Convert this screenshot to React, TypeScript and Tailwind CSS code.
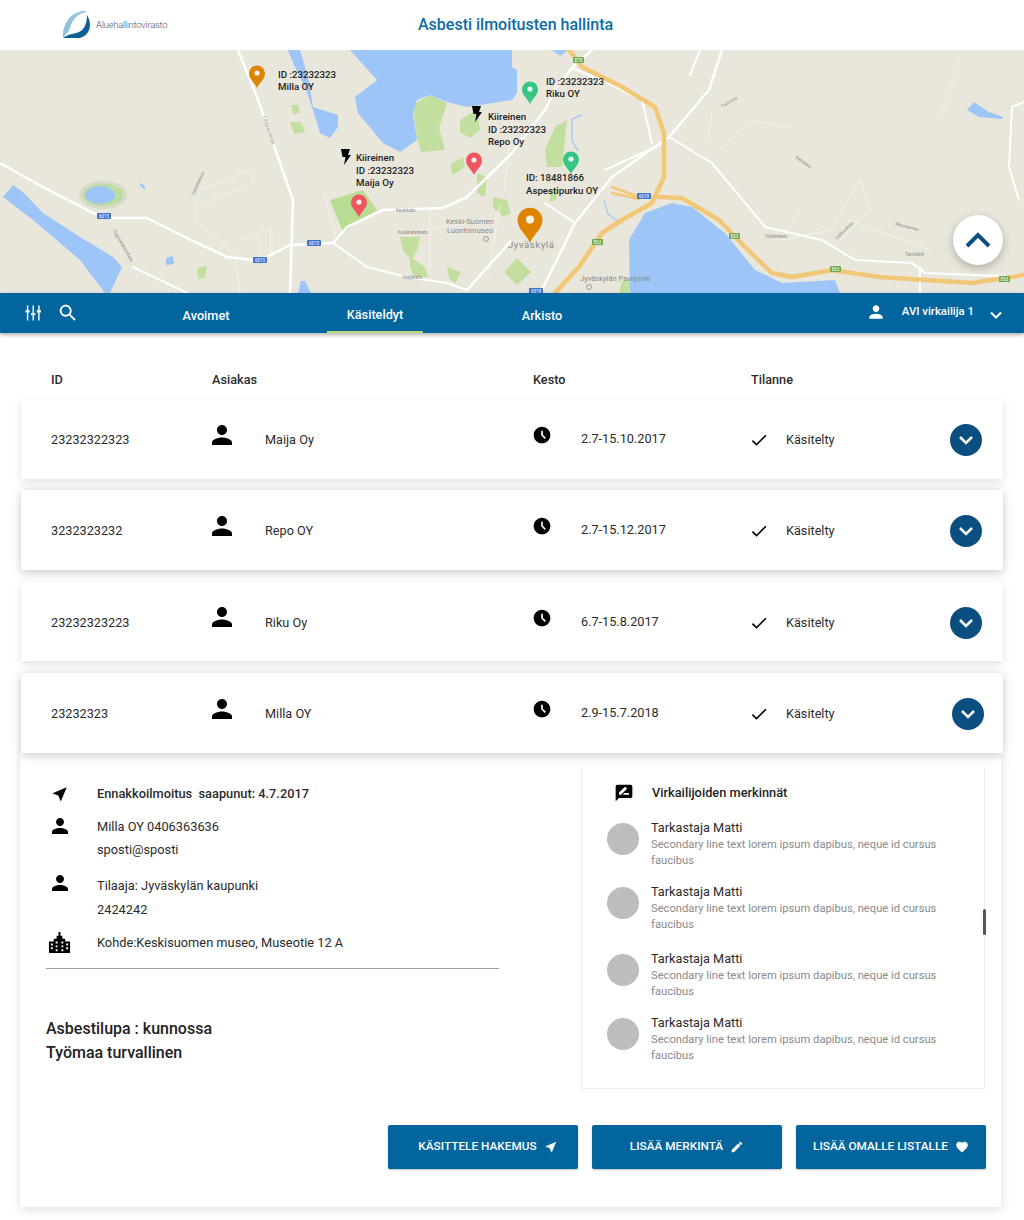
import { ReactNode } from "react";

const person = "M12 12c2.21 0 4-1.79 4-4s-1.79-4-4-4-4 1.79-4 4 1.79 4 4 4zm0 2c-2.67 0-8 1.34-8 4v2h16v-2c0-2.66-5.33-4-8-4z";
const clock = "M11.99 2C6.47 2 2 6.48 2 12s4.47 10 9.99 10C17.52 22 22 17.52 22 12S17.52 2 11.99 2zm3.3 14.71L11 12.41V7h2v4.59l3.71 3.71-1.42 1.41z";
const check = "M9 16.17L4.83 12l-1.42 1.41L9 19 21 7l-1.41-1.41z";
const nearMe = "M21 3L3 10.53v.98l6.84 2.65L12.48 21h.98L21 3z";
const review = "M20 2H4c-1.1 0-2 .9-2 2v18l4-4h14c1.1 0 2-.9 2-2V4c0-1.1-.9-2-2-2zM6 14v-2.47l6.88-6.88c.2-.2.51-.2.71 0l1.77 1.77c.2.2.2.51 0 .71L8.47 14H6zm12 0h-7.5l2-2H18v2z";
const edit = "M3 17.25V21h3.75L17.81 9.94l-3.75-3.75L3 17.25zM20.71 7.04c.39-.39.39-1.02 0-1.41l-2.34-2.34c-.39-.39-1.02-.39-1.41 0l-1.83 1.83 3.75 3.75 1.83-1.83z";
const heart = "M12 21.35l-1.45-1.32C5.4 15.36 2 12.28 2 8.5 2 5.42 4.42 3 7.5 3c1.74 0 3.41.81 4.5 2.09C13.09 3.81 14.76 3 16.5 3 19.58 3 22 5.42 22 8.5c0 3.78-3.4 6.86-8.55 11.54L12 21.35z";
const search = "M15.5 14h-.79l-.28-.27C15.41 12.59 16 11.11 16 9.5 16 5.91 13.09 3 9.5 3S3 5.91 3 9.5 5.91 16 9.5 16c1.61 0 3.09-.59 4.23-1.57l.27.28v.79l5 4.99L20.49 19l-4.99-5zm-6 0C7.01 14 5 11.99 5 9.5S7.01 5 9.5 5 14 7.01 14 9.5 11.99 14 9.5 14z";
const building = "M1 23V11h5V8h3V5h2V1h2v4h2v3h3v3h5v12H1zM3 13v2h2v-2H3zm0 4v2h2v-2H3zm5-6v2h2v-2H8zm0 4v2h2v-2H8zm0 4v2h2v-2H8zm6-8v2h2v-2h-2zm0 4v2h2v-2h-2zm0 4v2h2v-2h-2zm5-6v2h2v-2h-2zm0 4v2h2v-2h-2z";

function Icon({ d, size = 24, className = "" }: { d: string; size?: number; className?: string }) {
  return (
    <svg width={size} height={size} viewBox="0 0 24 24" fill="currentColor" fillRule="evenodd" className={className}>
      <path d={d} />
    </svg>
  );
}

function Pin({ x, y, s, color }: { x: number; y: number; s: number; color: string }) {
  // x,y = tip of the pin, s = width
  const k = s / 16;
  return (
    <g transform={`translate(${x} ${y}) scale(${k})`}>
      <path d="M0 0C-2-5-8-9-8-14.5A8 8 0 0 1 8-14.5C8-9 2-5 0 0z" fill={color} />
      <circle cx="0" cy="-15" r="2.6" fill="#fff" fillOpacity="0.9" />
    </g>
  );
}

function Bolt({ x, y }: { x: number; y: number }) {
  return <path transform={`translate(${x} ${y})`} d="M0 0h9L7 6h3L3 16l1.5-8H1.5z" fill="#000" />;
}

function Shield({ x, y, t, green }: { x: number; y: number; t: string; green?: boolean }) {
  return (
    <g>
      <rect x={x} y={y} width={green ? 11 : 14} height="6" rx="1" fill={green ? "#6fa94f" : "#3f74c9"} />
      <text x={x + (green ? 5.5 : 7)} y={y + 5} fontSize="4.5" fill="#fff" textAnchor="middle" fontFamily="Roboto">{t}</text>
    </g>
  );
}

function MapDrawing() {
  return (
    <svg viewBox="0 50 1024 243" width="1024" height="243" className="block">
      <rect x="0" y="50" width="1024" height="243" fill="#e9e6dc" />
      {/* parks */}
      <g fill="#c3dfa0">
        <path d="M330 200l33-10 14 20-34 22z" fill="#b9dc93" />
        <path d="M413 105l17-10 17 8-8 25 6 22-24 2-4-14z" />
        <path d="M460 120l17-10 3 20-10 8-10-6z" />
        <path d="M477 173l10 4-2 20-8-4zM493 197l14 3 4 14-8 2-10-8zM400 237h20l-3 14-6 9-8-10zM410 257l15 10 3 10-14 0-4-10zM447 267l14 5-6 12-6-6zM450 165l13-8 2 10-12 8z" />
        <path d="M291 105l7 0 2 8-7 1zM290 122l11 0 4 10-11 2zM197 268l10-2-2 12-7 1z" />
        <path d="M545 150l10-23 12-7-5 47-15 0z" />
        <path d="M517 258l14 14-14 13-13-13zM550 190l8-2-2 12-6 2zM622 281l10-3-3 15h-10z" />
      </g>
      {/* water */}
      <g fill="#9dc5f8">
        <path d="M350 50L377 80 355 97 358 113 383 143 400 152 417 140 413 113 417 100 430 95 447 102 467 107 512 100 517 93 517 70 512 67 512 50z" />
        <path d="M288 50L300 50 308 77 313 107 338 115 338 127 330 138 320 133 313 110 305 87 293 63z" />
        <path d="M3 197L13 185 23 192 43 213 80 237 113 257 122 267 110 293 105 293 80 260 33 220z" />
        <path d="M629 240L645 213 672 203 692 207 725 233 755 270 782 283 835 280 840 293 630 293z" />
        <path d="M967 110L974 102 989 112 1003 117 1002 119 979 117z" />
        <path d="M166 258l7-2 1 8-8 1zM139 183l5 2 2 4-4-1zM552 50h16l-8 6zM298 293l3-12 4 0 6 12z" />
      </g>
      <g fill="none" stroke="#a9cfef" strokeWidth="1.5">
        <path d="M582 115l-10 4 0 22 6 10M604 200l4 14 14 10" />
      </g>
      <ellipse cx="103" cy="195" rx="24" ry="14" fill="#d5dbc5" />
      <ellipse cx="103" cy="195" rx="20" ry="11" fill="#bfdca0" />
      <ellipse cx="100" cy="195" rx="15" ry="9" fill="#9dc5f8" />
      {/* minor roads */}
      <g fill="none" stroke="#f4f2ec" strokeWidth="1">
        <path d="M200 190l50-20 4 12-50 22M197 200l-2 20 40 35 5 38M240 240l30-12 0 30M260 240v20M272 230v25M323 190l14 50M420 230l60-8M430 210v60M500 205l-12 70M512 120l-8 70M712 110l-4 30M800 210l-20 30 50-10 30-50 10 30-30 30M720 150l30-30 40 8M850 220l80 30M960 60l-20 60" />
      </g>
      {/* white roads */}
      <g fill="none" stroke="#ffffff" strokeLinecap="round" strokeLinejoin="round" strokeWidth="2">
        <path strokeWidth="2.5" d="M238 50L257 97 293 200 290 293" />
        <path strokeWidth="2.5" d="M0 163L43 187 93 213 113 218 147 218 187 238 227 257 253 260 267 257 290 245 333 243 347 227 383 210 443 208 467 197 512 153 545 110 555 90 572 68 592 50" />
        <path d="M333 243L367 267 407 277 447 283 467 290" />
        <path strokeWidth="2.5" d="M467 290L512 240" />
        <path d="M545 203L575 223" />
        <path d="M133 267L187 293" />
        <path strokeWidth="2.5" d="M542 290L575 223 612 177 669 137 709 90 722 50" />
        <path d="M669 137L712 163 765 227 822 240 855 260 912 263 925 273 1024 277" />
        <path d="M920 267V293M1012 107L1009 167 1019 200M1012 107L1024 102" />
        <path d="M572 68L608 83 642 100 652 143M605 170L660 145M700 50L690 75" />
      </g>
      {/* highway */}
      <g fill="none" stroke="#f2c777" strokeLinecap="round" strokeLinejoin="round" strokeWidth="4.5">
        <path d="M569 50L582 67 622 87 655 107 664 133 664 177 652 203 622 220 602 233 579 267 555 293" />
        <path d="M659 197L682 198 719 220 745 247 772 273 792 277 832 270 879 277 972 283 1024 275" />
        <path strokeWidth="2.5" d="M612 187L639 197 660 197M612 193L639 199" />
      </g>
      <Shield x={573} y={57} t="E75" green />
      <Shield x={637} y={193} t="6018" />
      <Shield x={592} y={239} t="E63" green />
      <Shield x={729} y={233} t="E63" green />
      <Shield x={830} y={266} t="E63" green />
      <Shield x={999} y={276} t="E63" green />
      <Shield x={97} y={213} t="6015" />
      <Shield x={253} y={257} t="6015" />
      <Shield x={307} y={240} t="6015" />
      <Shield x={529} y={288} t="6018" />
      <g fontFamily="Roboto" fill="#8b8a85">
        <text x="446" y="224" fontSize="7.5">Keski-Suomen</text>
        <text x="447" y="233" fontSize="7.5">Luontomuseo</text>
        <text x="508" y="248" fontSize="9.5" letterSpacing="0.6">Jyväskylä</text>
        <text x="580" y="281" fontSize="7.5">Jyväskylän Paviljonki</text>
        <text x="396" y="212" fontSize="4.5">Keskikatu</text>
        <text x="398" y="234" fontSize="4.5">Kuokkalankatu</text>
        <text x="402" y="279" fontSize="4.5">Vaajakatu</text>
        <text x="765" y="238" fontSize="4.5">Ylistönkatu</text>
        <text x="905" y="256" fontSize="4.5">Tavinlahti</text>
        <text transform="translate(263 117) rotate(72)" fontSize="4.5">Laajavuorentie</text>
        <text transform="translate(194 195) rotate(-65)" fontSize="4.5">Syrjälänkatu</text>
        <text transform="translate(113 231) rotate(60)" fontSize="4.5">Cygnaeuksenkatu</text>
        <text transform="translate(722 108) rotate(-30)" fontSize="4.5">Tuohistie</text>
        <text transform="translate(795 158) rotate(35)" fontSize="4.5">Sahakatu</text>
        <text transform="translate(837 240) rotate(-45)" fontSize="4.5">Halikonkatu</text>
        <text transform="translate(895 225) rotate(15)" fontSize="4.5">Miesniemen</text>
      </g>
      <circle cx="486" cy="239" r="2.5" fill="none" stroke="#a9978a" strokeWidth="1" />
      <circle cx="589" cy="287" r="2.5" fill="none" stroke="#a9978a" strokeWidth="1" />
      <Pin x={257} y={88} s={16} color="#dd8500" />
      <Pin x={359} y={217} s={16} color="#f0555f" />
      <Pin x={474} y={175} s={16} color="#f0555f" />
      <Pin x={530} y={104} s={16} color="#36c684" />
      <Pin x={571} y={174} s={16} color="#36c684" />
      <Pin x={530} y={243} s={25} color="#dd8500" />
      <Bolt x={341} y={149} />
      <Bolt x={472} y={106} />
    </svg>
  );
}

function MapLabel({ className, lines }: { className: string; lines: string[] }) {
  return (
    <div className={`absolute text-[9.7px] font-medium text-[#1c1c1c] whitespace-nowrap ${className}`}>
      {lines.map((l) => <div key={l}>{l}</div>)}
    </div>
  );
}

function Logo() {
  return (
    <div className="flex items-center gap-[5px] ml-[62px]">
      <svg width="29" height="30" viewBox="0 0 29 30">
        <path d="M1 28C0 15 8 2 22 1c2 0 3 1 3 1C14 3 9 12 7 21z" fill="#8fc3df" />
        <path d="M1 28C6 24 12 24 17 22 22 20 25 14 25 5c2 3 3 7 3 10 0 9-8 14-14 13-6 0-10 0-13 0z" fill="#0e5e98" />
      </svg>
      <span className="text-[9.6px] font-light tracking-[-0.3px] text-[#45607c]">Aluehallintovirasto</span>
    </div>
  );
}

function Tab({ label, active, className = "" }: { label: string; active?: boolean; className?: string }) {
  return (
    <div className={`h-full w-[96px] flex items-center justify-center text-[12.7px] font-medium pt-[5px] text-white ${active ? "border-b-2 border-[#b7d97a]" : ""} ${className}`}>
      {label}
    </div>
  );
}

function Nav() {
  return (
    <nav className="relative z-10 h-[40px] bg-[#02659e] text-white flex items-stretch shadow-[0_2px_4px_rgba(0,0,0,0.3)]">
      <div className="flex items-center pl-[25px] w-[158px] -mt-[1px]">
        <svg width="16" height="16" viewBox="0 0 17 16" fill="#fff">
          <path d="M2 0h1.5v5H5v2.5H3.500V16H2V7.500H.5V5H2zM8 0h1.500v8H11v2.500H9.500V16H8v-5.500H6.500V8H8zM14 0h1.500v5H17v2.500h-1.500V16H14V7.500h-1.500V5H14z" />
        </svg>
        <Icon d={search} size={22} className="ml-[16px]" />
      </div>
      <Tab label="Avoimet" />
      <Tab label="Käsiteldyt" active className="ml-[73px]" />
      <Tab label="Arkisto" className="ml-[71px]" />
      <div className="ml-auto flex items-center pr-[21px] pb-[2px]">
        <Icon d={person} size={20} className="mr-[16px]" />
        <span className="text-[11.4px] font-medium mr-[15px]">AVI virkailija 1</span>
        <svg width="14" height="14" viewBox="0 0 14 14" fill="none" stroke="#fff" strokeWidth="2" className="mt-[5px]"><path d="M2 4.500l5 5 5-5" /></svg>
      </div>
    </nav>
  );
}

const gridCols = "grid grid-cols-[161px_53px_268px_48px_170px_35px_1fr] pl-[30px] items-center";

function Row({ id, name, date, soft, fourth, className = "h-[80px]" }: { id: string; name: string; date: string; soft?: boolean; fourth?: boolean; className?: string }) {
  return (
    <div className={`relative z-[1] pt-[2px] bg-white ${gridCols} ${soft ? "shadow-[0_3px_8px_rgba(0,0,0,0.12)]" : "shadow-[0_2px_10px_rgba(0,0,0,0.22)]"} text-[12.7px] text-[#2b2b2b] ${className}`}>
      <div>{id}</div>
      <div className="-ml-[5px] -mt-[11px]"><Icon d={person} size={30} className="text-black" /></div>
      <div>{name}</div>
      <div className="-ml-[1px] -mt-[10px]"><Icon d={clock} size={20} className="text-black" /></div>
      <div className="-mt-[2px]">{date}</div>
      <div><Icon d={check} size={20} className="text-black -ml-[2px]" /></div>
      <div className="flex items-center justify-between pr-[21px]">
        <span>Käsitelty</span>
        <span className={`w-[32px] h-[32px] rounded-full bg-[#0b4f80] flex items-center justify-center ${fourth ? "relative left-[2px]" : ""}`}>
          <svg width="18" height="18" viewBox="0 0 18 18" fill="none" stroke="#fff" strokeWidth="2.5"><path d="M3 6l6 6 6-6" /></svg>
        </span>
      </div>
    </div>
  );
}

function InfoRow({ icon, children, className = "" }: { icon?: ReactNode; children: ReactNode; className?: string }) {
  return (
    <div className={`flex items-center text-[12.8px] text-[#2b2b2b] ${className}`}>
      <div className="w-[51px] flex justify-start pl-[5px] text-black">{icon}</div>
      <div>{children}</div>
    </div>
  );
}

function Note() {
  return (
    <div className="flex">
      <div className="w-[32px] h-[32px] mt-[3px] rounded-full bg-[#bdbdbd] shrink-0" />
      <div className="ml-[12px]">
        <div className="text-[12.7px] leading-[16px] text-[#2b2b2b]">Tarkastaja Matti</div>
        <div className="text-[11.2px] leading-[16px] mt-[1px] text-[#8a8a8a] w-[300px]">
          Secondary line text lorem ipsum dapibus, neque id cursus faucibus
        </div>
      </div>
    </div>
  );
}

function ActionButton({ label, icon, size = 14, className = "" }: { label: string; icon: string; size?: number; className?: string }) {
  return (
    <button className={`w-[190px] h-[44px] rounded-[2px] bg-[#02659e] text-white text-[11.8px] font-medium flex items-center justify-center gap-[7px] shadow-[0_1px_2px_rgba(0,0,0,0.25)] ${className}`}>
      {label}
      <Icon d={icon} size={size} />
    </button>
  );
}

export default function App() {
  return (
    <div className="w-[1024px] h-[1220px] bg-white overflow-hidden font-['Roboto',sans-serif]">
      <header className="relative h-[50px] bg-white flex items-center">
        <Logo />
        <h1 className="absolute left-[418px] top-[15px] text-[16px] leading-[20px] font-medium text-[#0b6ca5]">
          Asbesti ilmoitusten hallinta
        </h1>
      </header>

      <div className="relative h-[243px] overflow-hidden">
        <MapDrawing />
        <MapLabel className="left-[278px] top-[19px] leading-[11.5px]" lines={["ID :23232323", "Milla OY"]} />
        <MapLabel className="left-[356px] top-[102px] leading-[12.5px]" lines={["Kiireinen", "ID :23232323", "Maija Oy"]} />
        <MapLabel className="left-[488px] top-[61px] leading-[12.5px]" lines={["Kiireinen", "ID :23232323", "Repo Oy"]} />
        <MapLabel className="left-[546px] top-[26px] leading-[11.5px]" lines={["ID :23232323", "Riku OY"]} />
        <MapLabel className="left-[526px] top-[122px] leading-[12.5px]" lines={["ID: 18481866", "Aspestipurku OY"]} />
        <div className="absolute left-[953px] top-[165px] w-[50px] h-[50px] rounded-full bg-white flex items-center justify-center shadow-[0_3px_8px_rgba(0,0,0,0.25)]">
          <svg width="26" height="16" viewBox="0 0 26 16" fill="none" stroke="#0b4f80" strokeWidth="4"><path d="M2 14L13 3l11 11" /></svg>
        </div>
      </div>

      <Nav />

      <div className={`${gridCols} ml-[21px] w-[982px] h-[66px] pt-[27px] text-[12.7px] font-medium text-[#2b2b2b]`}>
        <div>ID</div>
        <div className="col-span-2">Asiakas</div>
        <div className="col-span-2">Kesto</div>
        <div className="col-span-2">Tilanne</div>
      </div>

      <div className="ml-[21px] w-[982px] flex flex-col gap-[11px]">
        <Row id="23232322323" name="Maija Oy" date="2.7-15.10.2017" soft />
        <Row id="3232323232" name="Repo OY" date="2.7-15.12.2017" />
        <Row id="23232323223" name="Riku Oy" date="6.7-15.8.2017" soft className="mt-[1px] h-[79px]" />
        <Row id="23232323" name="Milla OY" date="2.9-15.7.2018" fourth className="mt-[1px] h-[80px]" />
      </div>

      <section className="ml-[20px] w-[981px] h-[454px] bg-white shadow-[0_2px_10px_rgba(0,0,0,0.14)] relative">
        <div className="flex pl-[26px]">
          <div className="w-[453px] pt-[32px]">
            <InfoRow icon={<Icon d={nearMe} size={18} />} className="h-[24px] font-medium -mt-[3px]">Ennakkoilmoitus&nbsp; saapunut: 4.7.2017</InfoRow>
            <InfoRow icon={<Icon d={person} size={24} className="-ml-[3px] -mt-[3px]" />} className="h-[24px] mt-[9px]">Milla OY 0406363636</InfoRow>
            <InfoRow className="h-[24px] -mt-[1px]">sposti@sposti</InfoRow>
            <InfoRow icon={<Icon d={person} size={24} className="-ml-[3px] -mt-[6px]" />} className="h-[24px] mt-[12px]">Tilaaja: Jyväskylän kaupunki</InfoRow>
            <InfoRow className="h-[24px] mt-0">2424242</InfoRow>
            <InfoRow icon={<Icon d={building} size={23} className="-ml-[3px] -mt-[2px]" />} className="h-[24px] mt-[9px]">Kohde:Keskisuomen museo, Museotie 12 A</InfoRow>
            <div className="mt-[13px] border-t border-[#9e9e9e]" />
            <div className="mt-[48px] text-[16px] leading-[24px] font-medium text-[#222]">
              <div>Asbestilupa : kunnossa</div>
              <div>Työmaa turvallinen</div>
            </div>
          </div>
          <div className="relative ml-[82px] mt-[15px] w-[404px] h-[321px] border-l border-r border-b border-[#eeeeee] pl-[25px] pt-[13px]">
            <div className="flex items-center h-[24px] text-[12.8px] font-medium text-[#1f1f1f]">
              <Icon d={review} size={20} className="text-black ml-[7px]" />
              <span className="ml-[18px]">Virkailijoiden merkinnät</span>
            </div>
            <div className="mt-[15px] flex flex-col">
              <div className="h-[64px]"><Note /></div>
              <div className="h-[67px]"><Note /></div>
              <div className="h-[64px]"><Note /></div>
              <div className="h-[64px]"><Note /></div>
            </div>
            <div className="absolute -right-[2px] top-[141px] w-[3px] h-[26px] rounded-full bg-[#555]" />
          </div>
        </div>
        <div className="absolute left-[368px] top-[372px] flex gap-[14px]">
          <ActionButton label="KÄSITTELE HAKEMUS" icon={nearMe} className="pl-[10px]" />
          <ActionButton label="LISÄÄ MERKINTÄ" icon={edit} />
          <ActionButton label="LISÄÄ OMALLE LISTALLE" icon={heart} />
        </div>
      </section>
    </div>
  );
}
